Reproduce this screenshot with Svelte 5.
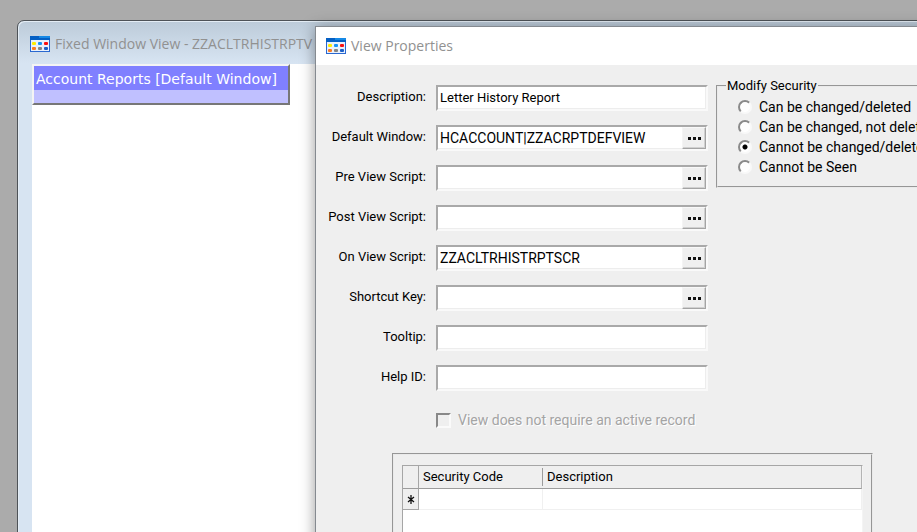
<script>
  let fields = $state([
    { id: 'description', label: 'Description:', value: 'Letter History Report', browse: false },
    { id: 'default-window', label: 'Default Window:', value: 'HCACCOUNT|ZZACRPTDEFVIEW', browse: true },
    { id: 'pre-view', label: 'Pre View Script:', value: '', browse: true },
    { id: 'post-view', label: 'Post View Script:', value: '', browse: true },
    { id: 'on-view', label: 'On View Script:', value: 'ZZACLTRHISTRPTSCR', browse: true },
    { id: 'shortcut', label: 'Shortcut Key:', value: '', browse: true },
    { id: 'tooltip', label: 'Tooltip:', value: '', browse: false },
    { id: 'help-id', label: 'Help ID:', value: '', browse: false }
  ]);

  const levels = [
    'Can be changed/deleted',
    'Can be changed, not deleted',
    'Cannot be changed/deleted',
    'Cannot be Seen'
  ];
  let security = $state('Cannot be changed/deleted');
</script>

{#snippet appIcon()}
  <svg class="app-icon" width="20" height="16" viewBox="0 0 20 16" aria-hidden="true">
    <rect width="20" height="16" fill="#2a68d0" />
    <rect width="20" height="4" fill="#0560c4" />
    <rect x="9" width="11" height="2" fill="#1689e6" />
    <rect x="1" y="4" width="18" height="11" fill="#e9f1fc" />
    <rect x="2" y="6" width="4" height="3" rx="1" fill="#ffee00" />
    <rect x="8" y="6" width="4" height="3" rx="1" fill="#1593f5" />
    <rect x="14" y="6" width="4" height="3" rx="1" fill="#fa1111" />
    <rect x="2" y="11" width="4" height="3" rx="1" fill="#fb7a22" />
    <rect x="8" y="11" width="4" height="3" rx="1" fill="#858585" />
    <rect x="14" y="11" width="4" height="3" rx="1" fill="#1b5fc8" />
  </svg>
{/snippet}

<main class="desktop">
  <section class="parent-window">
    <header class="parent-title">
      {@render appIcon()}
      <span>Fixed Window View - ZZACLTRHISTRPTV</span>
    </header>
    <div class="parent-client">
      <div class="child-window">
        <div class="child-title">Account Reports [Default Window]</div>
      </div>
    </div>
  </section>

  <section class="dialog" aria-label="View Properties">
    <header class="dialog-title">
      {@render appIcon()}
      <span>View Properties</span>
    </header>
    <form class="dialog-body">
      <div class="top">
        <div class="fields">
          {#each fields as field (field.id)}
            <div class="row">
              <label for={field.id}>{field.label}</label>
              <div class="box" class:reference={field.browse}>
                <input id={field.id} type="text" bind:value={field.value} spellcheck="false" />
                {#if field.browse}
                  <button type="button" aria-label="Browse">
                    <svg width="13" height="3" viewBox="0 0 13 3" aria-hidden="true">
                      <path d="M0 0h3v3H0zM5 0h3v3H5zM10 0h3v3h-3z" fill="#111" />
                    </svg>
                  </button>
                {/if}
              </div>
            </div>
          {/each}
        </div>
        <fieldset>
          <legend>Modify Security</legend>
          {#each levels as level}
            <label class="option">
              <input type="radio" name="security" value={level} bind:group={security} />
              <span>{level}</span>
            </label>
          {/each}
        </fieldset>
      </div>

      <label class="check">
        <input type="checkbox" disabled />
        <span>View does not require an active record</span>
      </label>

      <div class="grid-frame">
        <div class="grid-area">
          <table>
            <thead>
              <tr>
                <th class="marker"></th>
                <th class="code"><span>Security Code</span></th>
                <th><span>Description</span></th>
              </tr>
            </thead>
            <tbody>
              <tr>
                <td class="marker">
                  <svg width="8" height="9" viewBox="0 0 8 9" aria-hidden="true">
                    <path d="M4 0v9M1 2l6 5M7 2l-6 5" stroke="#111" stroke-width="1.300" />
                  </svg>
                </td>
                <td></td>
                <td></td>
              </tr>
            </tbody>
          </table>
        </div>
      </div>
    </form>
  </section>
</main>

<style>
  :global(body) {
    margin: 0;
  }

  .desktop {
    position: relative;
    height: 100vh;
    overflow: hidden;
    background: #ababab;
    color: #000;
    font: 14px/20px Roboto, "Liberation Sans", sans-serif;
  }

  .parent-window {
    position: absolute;
    inset: 20px -20px -20px 17px;
    box-sizing: border-box;
    border: 1px solid #4e5358;
    border-radius: 7px 0 0 0;
    background: linear-gradient(#bccbd9, #d7e4f2 42px);
    box-shadow: inset 1px 1px #e4edf5;
    display: flex;
    flex-direction: column;
    padding-left: 14px;
  }

  .parent-title,
  .dialog-title {
    display: flex;
    align-items: center;
    font: 14px/20px "Open Sans", "Noto Sans", sans-serif;
    color: #919191;
    white-space: nowrap;
  }

  .parent-title {
    height: 43px;
    gap: 5px;
    margin-left: -2px;
    padding-top: 3px;
    box-sizing: border-box;
  }

  .app-icon {
    flex: none;
  }

  .parent-client {
    flex: 1;
    background: #fff;
  }

  .child-window {
    width: 258px;
    height: 41px;
    box-sizing: border-box;
    border: 2px solid;
    border-color: #f4f4f4 #777 #777 #f4f4f4;
    background: #c0c0ff;
  }

  .child-title {
    background: #8080ff;
    color: #fff;
    height: 24px;
    padding-left: 2px;
    font: 14px/26px "DejaVu Sans", sans-serif;
    white-space: nowrap;
  }

  .dialog {
    position: absolute;
    inset: 26px -100px -40px 315px;
    border: 1px solid #858a90;
    background: #efefef;
    box-shadow: 0 2px 14px rgba(0, 0, 0, 0.4);
  }

  .dialog-title {
    height: 38px;
    background: #fff;
    gap: 5px;
    padding-left: 10px;
  }

  .dialog-body {
    padding: 11px 20px 0 10px;
  }

  .top {
    display: flex;
    align-items: flex-start;
    gap: 8px;
  }

  .fields {
    display: grid;
    gap: 14px;
    padding-top: 9px;
    font-size: 13px;
  }

  .row {
    display: grid;
    grid-template-columns: 100px 272px;
    gap: 10px;
    height: 26px;
  }

  .row label {
    text-align: right;
    line-height: 24px;
    white-space: nowrap;
  }

  .box {
    display: flex;
    background: #fff;
    border: 2px solid;
    border-color: #a9a9a9 #f9f9f9 #f9f9f9 #a9a9a9;
    box-shadow: inset -1px -1px #ededed;
    box-sizing: border-box;
  }

  .box.reference {
    font-size: 14px;
  }

  .box input {
    flex: 1;
    min-width: 0;
    border: 0;
    padding: 0 2px;
    background: transparent;
    color: #000;
    font: inherit;
    outline: 0;
  }

  .box button {
    width: 24px;
    height: 22px;
    padding: 0;
    display: grid;
    place-items: center;
    background: #efefef;
    border: 1px solid;
    border-color: #f8f8f8 #a4a4a4 #a4a4a4 #f4f4f4;
    box-shadow: inset -1px -1px #d0d0d0;
  }

  fieldset {
    flex: 1;
    margin: 0;
    padding: 1px 0 9px 18px;
    border: 2px groove #eaeaea;
    white-space: nowrap;
    min-width: 0;
  }

  legend {
    padding: 0 1px;
    margin-left: -10px;
    font-size: 13px;
  }

  .option {
    display: flex;
    align-items: center;
    gap: 7px;
    height: 20px;
  }

  input[type='radio'] {
    appearance: none;
    width: 14px;
    height: 14px;
    margin: 0 0 0 2px;
    border: 2px solid;
    border-color: #8a8a8a #f9f9f9 #f9f9f9 #8a8a8a;
    border-radius: 50%;
    background: #fff;
  }

  input[type='radio']:checked {
    background: radial-gradient(circle, #000 2px, #fff 3px);
  }

  .check {
    display: flex;
    align-items: center;
    gap: 7px;
    margin: 19px 0 0 110px;
    color: #a4a4a4;
    text-shadow: 1px 1px #fff;
    width: max-content;
  }

  input[type='checkbox'] {
    appearance: none;
    width: 15px;
    height: 15px;
    margin: 0;
    border: 2px solid;
    border-color: #888 #fafafa #fafafa #888;
    background: #efefef;
  }

  .grid-frame {
    width: 481px;
    height: 150px;
    box-sizing: border-box;
    margin: 23px 0 0 66px;
    padding: 10px 8px;
    border: 2px groove #eaeaea;
  }

  .grid-area {
    height: 100%;
    background: #fff;
    border: 1px solid #a6a6a6;
    border-right-color: #f4f4f4;
  }

  table {
    width: 100%;
    table-layout: fixed;
    border-collapse: separate;
    border-spacing: 0;
  }

  th {
    height: 22px;
    padding: 0;
    background: #efefef;
    border-bottom: 1px solid #9c9c9c;
    text-align: left;
    font-size: 13px;
    font-weight: 400;
  }

  th span {
    display: block;
    padding-left: 4px;
    line-height: 18px;
  }

  th.code span {
    border-right: 1px solid #9c9c9c;
  }

  th:last-child {
    border-right: 1px solid #b4b4b4;
  }

  td {
    height: 20px;
    padding: 0;
    border-bottom: 1px solid #f0f0f0;
    border-right: 1px solid #f0f0f0;
  }

  .marker {
    width: 15px;
    border-right: 1px solid #a6a6a6;
    background: #efefef;
    text-align: center;
    line-height: 16px;
  }

  td.marker {
    border-bottom-color: #a6a6a6;
  }

  .code {
    width: 124px;
  }
</style>
